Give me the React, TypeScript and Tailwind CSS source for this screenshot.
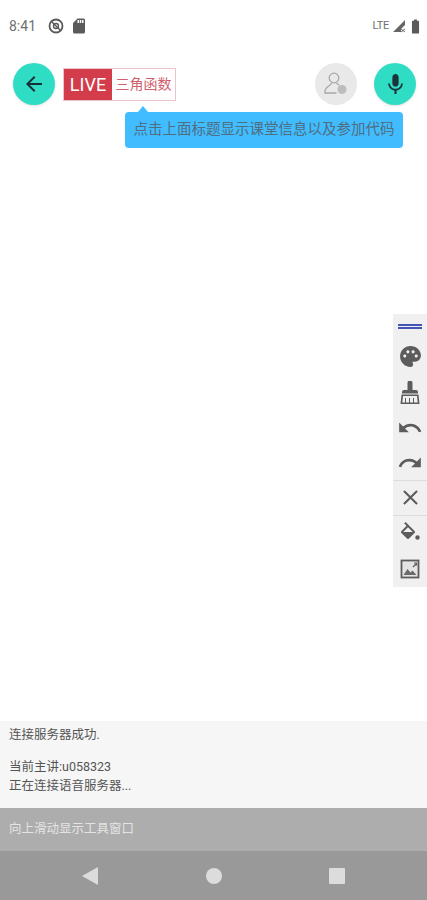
import React from 'react';
import { MdArrowBack, MdMic, MdPalette, MdUndo, MdRedo, MdClose, MdSdCard, MdBatteryFull } from 'react-icons/md';

const font = { fontFamily: '"Roboto", "Noto Sans CJK SC", sans-serif' };

const BrushIcon = () => (
  <svg width="20" height="23" viewBox="0 0 20 23" fill="#5c5c5c">
    <path d="M7.5 2a2.5 2.5 0 0 1 5 0v7h3.5a2 2 0 0 1 2 2v1.500H2V11a2 2 0 0 1 2-2h3.500z" />
    <path
      fillRule="evenodd"
      d="M1.500 13.500h17l1 9.500H.5zM3 15l-.7 6.500H5V17h1v4.500h3V17h1v4.500h3V17h1v4.500h3.700L17 15z"
    />
  </svg>
);

const FillIcon = () => (
  <svg width="24" height="24" viewBox="0 0 24 24" fill="#5c5c5c">
    <path d="M16.560 8.940L7.620 0 6.210 1.410l2.380 2.380-5.150 5.150c-.59.59-.59 1.540 0 2.120l5.500 5.500c.29.29.68.44 1.060.44s.77-.15 1.060-.44l5.500-5.500c.59-.58.59-1.530 0-2.120zM5.210 10L10 5.210 14.790 10H5.210z" />
    <circle cx="19.500" cy="15.500" r="2.200" />
  </svg>
);

const PictureIcon = () => (
  <svg width="22" height="22" viewBox="0 0 22 22" fill="none" stroke="#5c5c5c">
    <rect x="2.500" y="2.500" width="17" height="17" strokeWidth="1.800" fill="#e4e4e4" />
    <path d="M4.500 17l4-6 3 3.500 2-2 4 4.500z" fill="#6a6a6a" stroke="none" />
    <path d="M14 9l3-3M15 5h2.500v2.500" strokeWidth="1.200" />
  </svg>
);

const PersonChatIcon = () => (
  <svg width="26" height="26" viewBox="0 0 26 26" fill="none" stroke="#a8a8a8" strokeWidth="1.300">
    <circle cx="11" cy="7" r="4.800" />
    <path d="M8.500 12c0 2.500-6.500 3.500-6.500 8.500v1.500h11.500" />
    <path d="M13.500 12c.5 1 1.500 1.600 3 2.200" />
    <circle cx="19" cy="18.500" r="4.500" fill="#bdbdbd" stroke="none" />
  </svg>
);

const ToolDivider = () => <div className="h-px w-full bg-[#dcdcdc]" />;

export default function App() {
  return (
    <div className="flex h-[900px] w-[427px] flex-col overflow-hidden bg-white" style={font}>
      {/* status bar */}
      <div className="flex h-[52px] shrink-0 items-center pl-[9px] pr-[3px] text-[#707070]">
        <span className="text-[14px]">8:41</span>
        <svg className="ml-[12px]" width="16" height="16" viewBox="0 0 16 16" fill="none" stroke="#5a5a5a" strokeWidth="1.800">
          <circle cx="8" cy="8" r="6.500" />
          <path d="M3 3l10 10" strokeWidth="1.400" />
          <circle cx="8" cy="8" r="2.500" strokeWidth="1.400" />
        </svg>
        <MdSdCard className="ml-[6px]" size={18} color="#5a5a5a" />
        <span className="ml-auto text-[11px] tracking-tight">LTE</span>
        <svg className="ml-[3px]" width="14" height="14" viewBox="0 0 14 14">
          <path d="M1 13L13 1v5l-4 4v3z" fill="#666" />
          <path d="M9 10l4 3M13 10l-4 3" stroke="#666" strokeWidth="1" />
        </svg>
        <MdBatteryFull className="ml-[1px]" size={17} color="#5a5a5a" />
      </div>

      {/* header */}
      <div className="mt-[11px] flex h-[42px] shrink-0 items-center pl-[13px] pr-[11px]">
        <button className="flex size-[42px] items-center justify-center rounded-full bg-[#2fddc5] shadow-sm">
          <MdArrowBack size={24} color="#173036" />
        </button>
        <div className="ml-[8px] flex h-[33px] w-[113px] items-stretch border border-[#edc4ca]">
          <div className="flex w-[48px] items-center justify-center bg-[#d33c4b] text-[18px] text-white">LIVE</div>
          <div className="flex flex-1 items-center justify-center text-[14px] text-[#d0606c]">三角函数</div>
        </div>
        <div className="ml-auto flex size-[42px] items-center justify-center rounded-full bg-[#e9e9e9]">
          <PersonChatIcon />
        </div>
        <button className="ml-[17px] flex size-[42px] items-center justify-center rounded-full bg-[#2fddc5] shadow-sm">
          <MdMic size={25} color="#1c3338" />
        </button>
      </div>

      {/* tooltip */}
      <div className="relative ml-[125px] mt-[7px] flex h-[36px] w-[278px] shrink-0 items-center justify-center rounded-[4px] bg-[#40bcff] text-[14.5px] text-[#4f6e82]">
        <div className="absolute -top-[6px] left-[13px] size-0 border-x-[5px] border-b-[6px] border-x-transparent border-b-[#40bcff]" />
        点击上面标题显示课堂信息以及参加代码
      </div>

      {/* canvas */}
      <div className="flex flex-1 justify-end pt-[166px]">
        <div className="flex h-[273px] w-[34px] flex-col items-center bg-[#f0f0f0] text-[#5c5c5c]">
          <div className="mt-[10px] flex h-[5px] w-[24px] flex-col justify-between">
            <div className="h-[2px] bg-[#4455b5]" />
            <div className="h-[2px] bg-[#4455b5]" />
          </div>
          <MdPalette className="mt-[15px]" size={25} />
          <div className="mt-[12px] flex h-[23px] items-center">
            <BrushIcon />
          </div>
          <MdUndo className="mt-[11px]" size={26} />
          <MdRedo className="mt-[9px]" size={26} />
          <div className="mt-[4px] w-full">
            <ToolDivider />
          </div>
          <MdClose className="mt-[4px]" size={25} />
          <div className="mt-[5px] w-full">
            <ToolDivider />
          </div>
          <div className="mt-[6px] flex h-[24px] items-center">
            <FillIcon />
          </div>
          <div className="mt-[12px] flex h-[22px] items-center">
            <PictureIcon />
          </div>
        </div>
      </div>

      {/* log */}
      <div className="h-[87px] shrink-0 bg-[#f6f6f6] pl-[9px] pt-[4px] text-[12.5px] leading-[20px] text-[#555]">
        <div>连接服务器成功.</div>
        <div className="h-[12px]" />
        <div>当前主讲:u058323</div>
        <div className="-mt-[1px]">正在连接语音服务器...</div>
      </div>

      {/* swipe hint */}
      <div className="flex h-[43px] shrink-0 items-center bg-[#adadad] pl-[9px] text-[12.5px] text-[#e4e4e4]">
        向上滑动显示工具窗口
      </div>

      {/* nav bar */}
      <div className="flex h-[49px] shrink-0 items-center bg-[#999999]">
        <svg className="ml-[82px]" width="16" height="18" viewBox="0 0 16 18">
          <path d="M16 0v18L0 9z" fill="#dcdcdc" />
        </svg>
        <div className="ml-[108px] size-[16px] rounded-full bg-[#dcdcdc]" />
        <div className="ml-[107px] size-[16px] rounded-[1px] bg-[#dcdcdc]" />
      </div>
    </div>
  );
}
